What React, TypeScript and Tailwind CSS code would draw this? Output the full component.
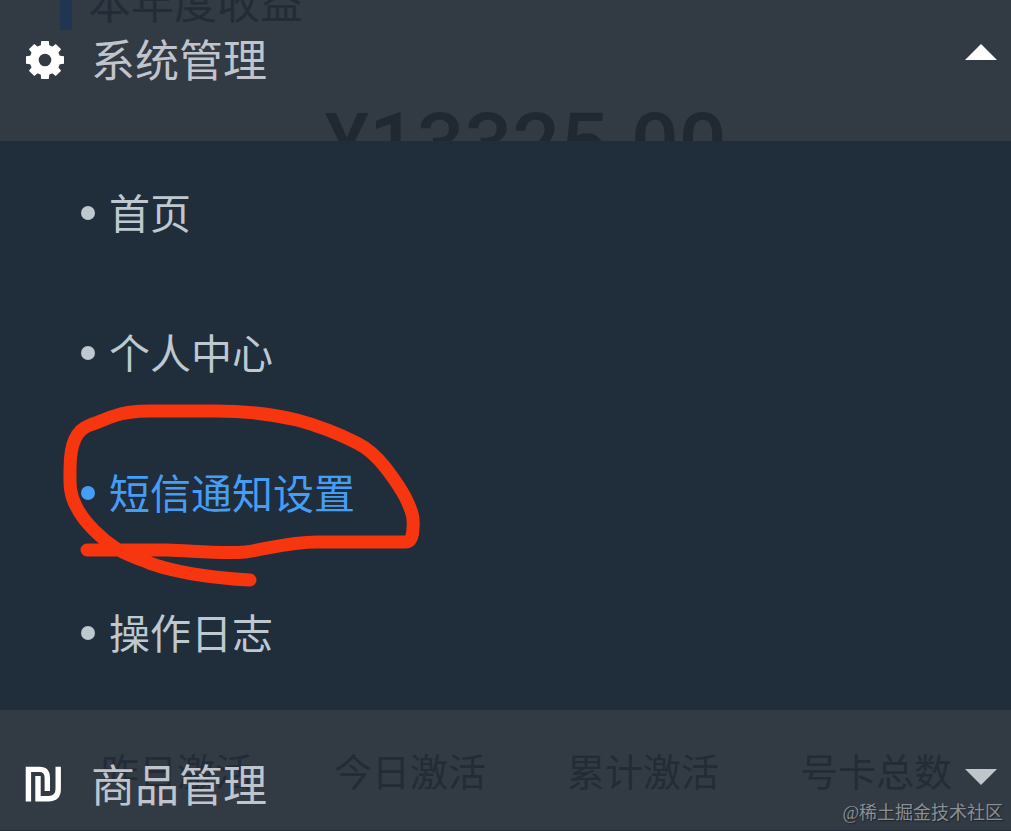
import React, { useState } from 'react';

const stats = ['昨日激活', '今日激活', '累计激活', '号卡总数'];

const systemItems = [
    { label: '首页', active: false },
    { label: '个人中心', active: false },
    { label: '短信通知设置', active: true },
    { label: '操作日志', active: false },
];

const GearIcon: React.FC = () => (
    <svg className="w-10 h-10 shrink-0" viewBox="-20 -20 40 40" fill="none" stroke="currentColor" aria-hidden="true">
        <circle r="10.8" strokeWidth="9" />
        {[0, 45, 90, 135, 180, 225, 270, 315].map(angle => (
            <path key={angle} d="M-4.4 -13 L-3.8 -19 H3.8 L4.4 -13 Z" fill="currentColor" stroke="none" transform={`rotate(${angle})`} />
        ))}
    </svg>
);

const ShekelIcon: React.FC = () => (
    <svg className="w-10 h-10 shrink-0" viewBox="0 0 40 40" fill="none" stroke="currentColor" strokeWidth="5.4" aria-hidden="true">
        <path d="M3.4 36.5V4.4H14.5Q22.3 4.4 22.3 13V26" />
        <path d="M13 11V33.7H23.5Q33.2 33.7 33.2 24V1.7" />
    </svg>
);

const Arrow: React.FC<{ open: boolean }> = ({ open }) => (
    <svg className={`w-8 h-4 ml-auto mb-4 ${open ? 'text-white' : 'text-[#c0c6ca]'}`} viewBox="0 0 32 16" fill="currentColor" aria-hidden="true">
        <path d={open ? 'M16 0L32 16H0Z' : 'M0 0H32L16 16Z'} />
    </svg>
);

// Dimmed page behind the open drawer
const Dashboard: React.FC = () => (
    <div className="col-start-1 row-start-1 flex flex-col bg-[#323a43] text-[#232c36] overflow-hidden" aria-hidden="true">
        <div className="flex h-8 px-15 gap-4">
            <div className="w-3 h-[30px] bg-[#1f3552]" />
            <div className="-mt-7 text-[43px] leading-[56px]">本年度收益</div>
        </div>
        <div className="mt-[68px] pl-10 text-center text-[84px] leading-[88px] font-medium font-[Roboto,sans-serif] text-[#202832]">¥13325.00</div>
        <div className="mt-auto mb-[34px] flex justify-between pl-[101px] pr-[59px] text-[38px] leading-[52px]">
            {stats.map(stat => <span key={stat}>{stat}</span>)}
        </div>
    </div>
);

const App: React.FC = () => {
    const [systemOpen, setSystemOpen] = useState(true);

    return (
        <div className="relative grid min-h-screen font-['Noto_Sans_CJK_SC',sans-serif] overflow-hidden border-b border-[#252e38]">
            <Dashboard />
            <nav className="col-start-1 row-start-1 z-10 text-[#c0c4cd]">
                <button type="button" aria-expanded={systemOpen} onClick={() => setSystemOpen(!systemOpen)} className="flex w-full h-[141px] items-start pt-7 pl-[25px] pr-[14px]">
                    <span className="flex w-full h-16 items-center gap-[26px]">
                        <span className="text-white"><GearIcon /></span>
                        <span className="pb-1 text-[44px] leading-[60px]">系统管理</span>
                        <Arrow open={systemOpen} />
                    </span>
                </button>
                {systemOpen && (
                    <ul className="bg-[#202d3b] pt-[2px] pb-[7px] text-[41px]">
                        {systemItems.map(item => (
                            <li key={item.label} className="relative">
                                <a href="#" className={`flex h-[140px] items-center gap-[14px] pl-[81px] ${item.active ? 'text-[#469df5]' : 'text-[#bdc8d1]'}`}>
                                    <span className="w-[14px] h-[14px] rounded-full bg-current" />
                                    <span className="pb-[2px]">{item.label}</span>
                                </a>
                                {item.active && (
                                    <svg className="absolute left-[50px] -top-[33px] w-[390px] h-[210px] pointer-events-none" viewBox="0 0 390 210" fill="none" stroke="#f7350f" strokeWidth="13" strokeLinecap="round" strokeLinejoin="round" aria-hidden="true">
                                        <path d="M200 190C180 189 162 187 143 184C126 181 111 178 97 172C86 168 76 164 67 159C53 150 34 133 26 116C19 103 20 92 20 80C20 68 21 57 25 49C28 42 32 38 40 35C50 32 57 28 64 26C75 22 87 21 100 21H165C195 21 222 24 247 30C270 36 289 44 307 53C319 59 327 67 335 77C345 90 353 101 358 113C362 122 364 128 363 138C363 145 361 152 356 152H267C238 152 218 159 195 162C173 164 145 161 117 160H37" />
                                    </svg>
                                )}
                            </li>
                        ))}
                    </ul>
                )}
                <button type="button" className="flex w-full h-[120px] items-start pt-[43px] pl-[25px] pr-[14px]">
                    <span className="flex w-full h-16 items-center gap-[26px]">
                        <span className="text-white"><ShekelIcon /></span>
                        <span className="pb-1 text-[44px] leading-[60px]">商品管理</span>
                        <Arrow open={false} />
                    </span>
                </button>
            </nav>
            <div className="absolute right-2 bottom-[3px] z-20 text-[18px] leading-7 text-[#8a8f95] font-['Liberation_Serif','Noto_Sans_CJK_SC',serif] [text-shadow:1px_1px_1px_#1c2229]">@稀土掘金技术社区</div>
        </div>
    );
};

export default App;
